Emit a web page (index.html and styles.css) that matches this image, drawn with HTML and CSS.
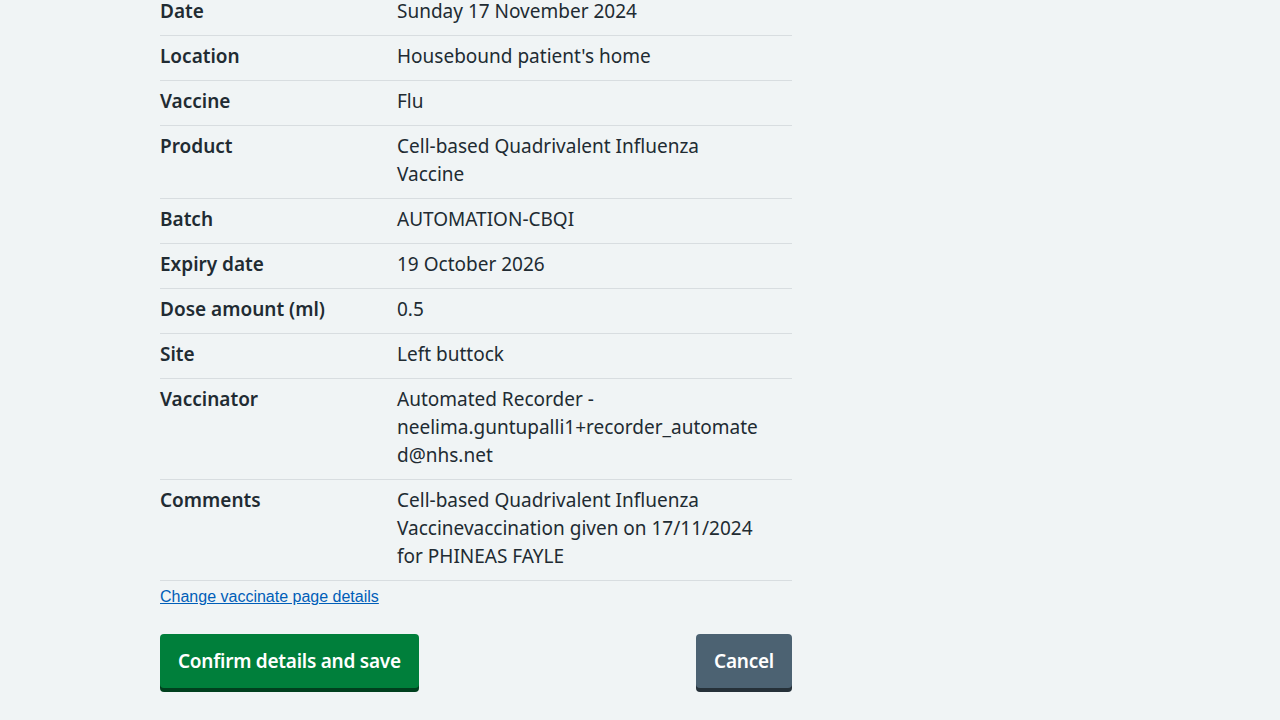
FILE: index.html
```html
<!DOCTYPE html>
<html lang="en">
<head>
<meta charset="utf-8">
<title>Check and confirm</title>
<link rel="stylesheet" href="styles.css">
</head>
<body>
<main class="page">
  <dl class="summary">
    <div class="row"><dt>Date</dt><dd>Sunday 17 November 2024</dd></div>
    <div class="row"><dt>Location</dt><dd>Housebound patient's home</dd></div>
    <div class="row"><dt>Vaccine</dt><dd>Flu</dd></div>
    <div class="row"><dt>Product</dt><dd>Cell-based Quadrivalent Influenza Vaccine</dd></div>
    <div class="row"><dt>Batch</dt><dd>AUTOMATION-CBQI</dd></div>
    <div class="row"><dt>Expiry date</dt><dd>19 October 2026</dd></div>
    <div class="row"><dt>Dose amount (ml)</dt><dd>0.5</dd></div>
    <div class="row"><dt>Site</dt><dd>Left buttock</dd></div>
    <div class="row"><dt>Vaccinator</dt><dd>Automated Recorder - neelima.guntupalli1+recorder_automated@nhs.net</dd></div>
    <div class="row"><dt>Comments</dt><dd>Cell-based Quadrivalent Influenza Vaccinevaccination given on 17/11/2024 for PHINEAS FAYLE</dd></div>
  </dl>
  <a class="change-link" href="#">Change vaccinate page details</a>
  <div class="actions">
    <button class="btn btn-primary" type="button">Confirm details and save</button>
    <button class="btn btn-secondary" type="button">Cancel</button>
  </div>
</main>
</body>
</html>
```
FILE: styles.css
```css
html, body {
  margin: 0;
  padding: 0;
  background: #f0f4f5;
}
body {
  font-family: "Noto Sans", "Liberation Sans", sans-serif;
  color: #212b32;
  font-size: 19px;
  line-height: 28px;
}
.page {
  width: 632px;
  margin: -9px 0 0 160px;
}
.summary {
  margin: 0;
}
.row {
  display: grid;
  grid-template-columns: 237px 371px;
  border-bottom: 1px solid #d8dde0;
}
.row dt,
.row dd {
  margin: 0;
  padding: 6px 0 10px;
}
.row dt {
  font-weight: 600;
}
.row dd {
  overflow-wrap: anywhere;
}
.change-link {
  display: inline-block;
  margin-top: 5px;
  font-family: "Liberation Sans", Arial, sans-serif;
  font-size: 16px;
  line-height: 20px;
  color: #005eb8;
  text-decoration: underline;
}
.actions {
  display: flex;
  justify-content: space-between;
  align-items: flex-start;
  margin-top: 25px;
  padding-bottom: 8px;
}
.btn {
  -webkit-appearance: none;
  appearance: none;
  display: inline-block;
  font-family: inherit;
  font-size: 19px;
  line-height: 28px;
  font-weight: 600;
  letter-spacing: -0.25px;
  color: #ffffff;
  border: 2px solid transparent;
  border-radius: 4px;
  padding: 11px 16px;
  margin: 0;
  cursor: pointer;
}
.btn-primary {
  background-color: #007f3b;
  box-shadow: 0 4px 0 0 #00401e;
}
.btn-secondary {
  background-color: #4c6272;
  box-shadow: 0 4px 0 0 #263139;
}
```
